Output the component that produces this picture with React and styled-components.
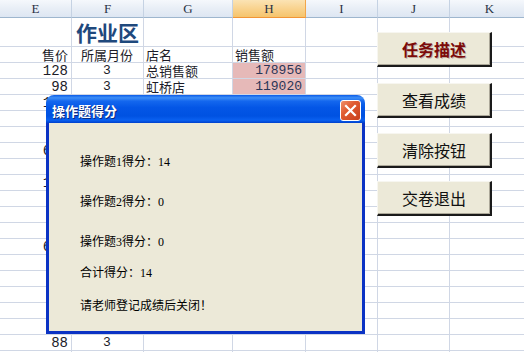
import React from "react";
import styled, { createGlobalStyle } from "styled-components";

const GlobalStyle = createGlobalStyle`
    body {
        margin: 0;
        background: #ffffff;
        overflow: hidden;
    }
`;

const columns = ["E", "F", "G", "H", "I", "J", "K"];

// rows behind the dialog only keep what peeks out on the left
const dataRows = [
    ["128", "3", "总销售额", "178956"],
    ["98", "3", "虹桥店", "119020"],
    ["168", "", "", ""],
    ["98", "", "", ""],
    ["75", "", "", ""],
    ["618", "", "", ""],
    ["88", "", "", ""],
    ["128", "", "", ""],
    ["98", "", "", ""],
    ["75", "", "", ""],
    ["88", "", "", ""],
    ["618", "", "", ""],
    ["98", "", "", ""],
    ["75", "", "", ""],
    ["88", "", "", ""],
    ["98", "", "", ""],
    ["75", "", "", ""],
    ["88", "3", "", ""],
    ["", "", "", ""]
];

const scores = [
    {text: "操作题1得分：14", gap: 0},
    {text: "操作题2得分：0", gap: 26},
    {text: "操作题3得分：0", gap: 26},
    {text: "合计得分：14", gap: 17},
    {text: "请老师登记成绩后关闭！", gap: 19}
];

const buttons = [
    {label: "任务描述", top: 32, strong: true},
    {label: "查看成绩", top: 83},
    {label: "清除按钮", top: 133},
    {label: "交卷退出", top: 181}
];

class App extends React.PureComponent {

    renderHead = () => columns.map((col) => (
        <HeadCell key={col} active={col === "H"}>{col}</HeadCell>
    ));

    renderTitleRow = () => columns.map((col) => (
        <Cell key={col}>{col === "F" ? <Title>作业区</Title> : null}</Cell>
    ));

    renderLabelRow = () => {
        const labels = [["售价", "right"], ["所属月份", "center"], ["店名", "left"], ["销售额", "left"], ["", "left"], ["", "left"], ["", "left"]];
        return labels.map(([text, align], index) => (
            <Cell key={index} align={align}>{text}</Cell>
        ));
    };

    renderData = () => dataRows.map((row, rowIndex) => {
        const pink = rowIndex < 2;
        return (
            <React.Fragment key={rowIndex}>
                <Cell align="right" size={14}>{row[0]}</Cell>
                <Cell align="center">{row[1]}</Cell>
                <Cell align="left">{row[2]}</Cell>
                <Cell align="right" fill={pink ? "#e6b9b8" : null} ink="#2b3556">{row[3]}</Cell>
                <Cell/>
                <Cell/>
                <Cell/>
            </React.Fragment>
        );
    });

    render() {
        return (
            <Page>
                <GlobalStyle/>
                <Sheet>
                    {this.renderHead()}
                    {this.renderTitleRow()}
                    {this.renderLabelRow()}
                    {this.renderData()}
                </Sheet>

                {buttons.map((item) => (
                    <SheetButton key={item.label} top={item.top} strong={item.strong}>
                        {item.label}
                    </SheetButton>
                ))}

                <Dialog>
                    <TitleBar>
                        <TitleText>操作题得分</TitleText>
                        <CloseButton>
                            <svg width="13" height="13" viewBox="0 0 13 13">
                                <path d="M2 2 L11 11 M11 2 L2 11" stroke="#fff" strokeWidth="2.2" strokeLinecap="square"/>
                            </svg>
                        </CloseButton>
                    </TitleBar>
                    <DialogBody>
                        {scores.map((item) => (
                            <ScoreLabel key={item.text} gap={item.gap}>{item.text}</ScoreLabel>
                        ))}
                    </DialogBody>
                </Dialog>
            </Page>
        );
    }
}

export default App;


const Page = styled.div`
    position: relative;
    width: 524px;
    height: 352px;
    overflow: hidden;
    background: #ffffff;
`;

const Sheet = styled.div`
    display: grid;
    grid-template-columns: 72px 72px 89px 73px 72px 72px 80px;
    grid-template-rows: 18px 29px repeat(20, 16px);
`;

const HeadCell = styled.div`
    display: flex;
    align-items: center;
    justify-content: center;
    box-sizing: border-box;
    border-right: 1px solid ${(p) => (p.active ? "#f2a64a" : "#c5d2e3")};
    border-bottom: 1px solid ${(p) => (p.active ? "#f29536" : "#9eb6ce")};
    background: ${(p) => (p.active
        ? "linear-gradient(to bottom, #fbe3b4 0%, #f9d38f 50%, #f5c46c 100%)"
        : "linear-gradient(to bottom, #f5f8fc 0%, #e8eef6 50%, #dde6f2 100%)")};
    font-family: "Liberation Serif", serif;
    font-size: 13px;
    color: #2a3245;
`;

const Cell = styled.div`
    display: flex;
    align-items: center;
    justify-content: ${(p) => (p.align === "right" ? "flex-end" : p.align === "center" ? "center" : "flex-start")};
    box-sizing: border-box;
    padding: 0 3px 0 2px;
    border-right: 1px solid #d0d7e5;
    border-bottom: 1px solid #d0d7e5;
    background: ${(p) => p.fill || "transparent"};
    font-family: "Liberation Mono", "Noto Sans CJK SC", monospace;
    font-size: ${(p) => p.size || 13}px;
    color: ${(p) => p.ink || "#1c1c28"};
    white-space: nowrap;
    overflow: visible;
`;

const Title = styled.span`
    padding-left: 2px;
    font-family: "Noto Sans CJK SC", sans-serif;
    font-size: 21px;
    font-weight: 700;
    color: #1f497d;
`;

const SheetButton = styled.div`
    position: absolute;
    left: 377px;
    top: ${(p) => p.top}px;
    width: 115px;
    height: 35px;
    box-sizing: border-box;
    display: flex;
    align-items: center;
    justify-content: center;
    background: #ece9d8;
    border-top: 1px solid #f7f6f0;
    border-left: 1px solid #f7f6f0;
    border-right: 2px solid #1a1a1a;
    border-bottom: 2px solid #1a1a1a;
    box-shadow: inset -1px -1px 0 #aca899;
    font-family: "Noto Sans CJK SC", sans-serif;
    font-size: 16px;
    font-weight: ${(p) => (p.strong ? 700 : 400)};
    color: ${(p) => (p.strong ? "#7c0a0a" : "#111111")};
    text-shadow: ${(p) => (p.strong ? "1px 1px 0 rgba(60, 0, 0, 0.25)" : "none")};
`;

const Dialog = styled.div`
    position: absolute;
    left: 46px;
    top: 95px;
    width: 319px;
    height: 239px;
    display: flex;
    flex-direction: column;
`;

const TitleBar = styled.div`
    height: 28px;
    box-sizing: border-box;
    padding: 3px 4px 0 6px;
    display: flex;
    align-items: center;
    justify-content: space-between;
    border-radius: 8px 8px 0 0;
    background: linear-gradient(to bottom,
        #0a5be8 0%, #3d8ef6 10%, #1467ee 22%, #0456e6 45%,
        #0052e2 75%, #0a60f0 90%, #0040cc 100%);
`;

const TitleText = styled.span`
    font-family: "Noto Sans CJK SC", sans-serif;
    font-size: 13px;
    font-weight: 700;
    color: #ffffff;
    text-shadow: 1px 1px 0 #0a2a80;
`;

const CloseButton = styled.div`
    width: 21px;
    height: 21px;
    box-sizing: border-box;
    display: flex;
    align-items: center;
    justify-content: center;
    border: 1px solid #ffffff;
    border-radius: 3px;
    background: linear-gradient(135deg, #f0906c 0%, #e05a30 40%, #c8401c 100%);
`;

const DialogBody = styled.div`
    flex: 1;
    display: flex;
    flex-direction: column;
    padding: 32px 0 0 31px;
    background: #ece9d8;
    border: 3px solid #0b33c4;
    border-top: none;
`;

const ScoreLabel = styled.div`
    margin-top: ${(p) => p.gap}px;
    line-height: 14px;
    font-family: "Liberation Serif", "Noto Sans CJK SC", serif;
    font-size: 12px;
    color: #000000;
`;
